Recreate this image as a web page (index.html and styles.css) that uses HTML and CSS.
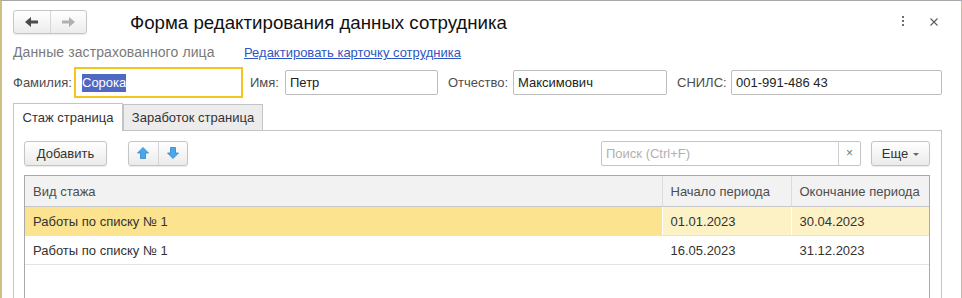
FILE: index.html
```html
<!DOCTYPE html>
<html lang="ru">
  <head>
    <meta charset="UTF-8" />
    <title>Форма редактирования данных сотрудника</title>
    <link rel="stylesheet" href="styles.css">
  </head>
  <body>
    <div class="window">
      <div class="header">
        <div class="nav">
          <span class="navBtn">
            <svg width="14" height="10" viewBox="0 0 14 10"><path d="M0 5 L6 0 V3.5 H13 V6.5 H6 V10 Z" fill="#4a4a4a"/></svg>
          </span>
          <span class="navBtn">
            <svg width="14" height="10" viewBox="0 0 14 10"><path d="M14 5 L8 0 V3.5 H1 V6.5 H8 V10 Z" fill="#b0b0b0"/></svg>
          </span>
        </div>
        <h1 class="title">Форма редактирования данных сотрудника</h1>
        <div class="tools">
          <svg class="kebab" width="4" height="12" viewBox="0 0 4 12">
            <rect x="1" y="0" width="2" height="2" fill="#6e6e6e"/>
            <rect x="1" y="4" width="2" height="2" fill="#6e6e6e"/>
            <rect x="1" y="8" width="2" height="2" fill="#6e6e6e"/>
          </svg>
          <svg class="close" width="10" height="10" viewBox="0 0 10 10"><path d="M1.5 1.5 L8.5 8.5 M8.5 1.5 L1.5 8.5" stroke="#5a5a5a" stroke-width="1.1"/></svg>
        </div>
      </div>

      <div class="subhead">
        <span class="groupName">Данные застрахованного лица</span>
        <a href="#" class="link">Редактировать карточку сотрудника</a>
      </div>

      <div class="fields">
        <label class="lbl lblSurname">Фамилия:</label>
        <div class="inp inpSurname focus"><span class="sel">Сорока</span></div>
        <label class="lbl lblName">Имя:</label>
        <div class="inp inpName">Петр</div>
        <label class="lbl lblPatr">Отчество:</label>
        <div class="inp inpPatr">Максимович</div>
        <label class="lbl lblSnils">СНИЛС:</label>
        <div class="inp inpSnils">001-991-486 43</div>
      </div>

      <div class="tabs">
        <div class="tab active">Стаж страница</div>
        <div class="tab">Заработок страница</div>
      </div>

      <div class="panel">
        <div class="toolbar">
          <button class="btn addBtn">Добавить</button>
          <div class="btnGroup">
            <span class="seg">
              <svg width="12" height="12" viewBox="0 0 12 12"><path d="M6 0.5 L11.5 6 H8.5 V11.5 H3.5 V6 H0.5 Z" fill="#4ba6ea" stroke="#2d86cc" stroke-width="0.8"/></svg>
            </span>
            <span class="seg">
              <svg width="12" height="12" viewBox="0 0 12 12"><path d="M6 11.5 L11.5 6 H8.5 V0.5 H3.5 V6 H0.5 Z" fill="#4ba6ea" stroke="#2d86cc" stroke-width="0.8"/></svg>
            </span>
          </div>
          <div class="search">
            <div class="searchInput">Поиск (Ctrl+F)</div>
            <div class="searchClear">×</div>
          </div>
          <button class="btn moreBtn">Еще <span class="caret"></span></button>
        </div>

        <div class="grid">
          <table>
            <colgroup>
              <col />
              <col class="colStart" />
              <col class="colEnd" />
            </colgroup>
            <thead>
              <tr>
                <th>Вид стажа</th>
                <th>Начало периода</th>
                <th>Окончание периода</th>
              </tr>
            </thead>
            <tbody>
              <tr class="current">
                <td class="cellActive">Работы по списку № 1</td>
                <td>01.01.2023</td>
                <td>30.04.2023</td>
              </tr>
              <tr>
                <td>Работы по списку № 1</td>
                <td>16.05.2023</td>
                <td>31.12.2023</td>
              </tr>
            </tbody>
          </table>
        </div>
      </div>
    </div>
  </body>
</html>
```

FILE: styles.css
```css
body {
  margin: 0;
  font-family: "Liberation Sans", Arial, sans-serif;
  font-size: 13px;
  color: #333;
  background: #fff;
  overflow: hidden;
}

.window {
  height: 298px;
  box-sizing: border-box;
  border-top: 1px solid #a7a7a7;
  border-left: 2px solid #cdbf86;
  border-right: 1px solid #cdbf86;
  padding: 0 19px 0 11px;
  overflow: hidden;
}

.header {
  height: 41px;
  display: flex;
  align-items: center;
}

.nav {
  display: flex;
  width: 74px;
  height: 24px;
  box-sizing: border-box;
  border: 1px solid #c6c6c6;
  border-radius: 3px;
  background: linear-gradient(#ffffff, #ececec);
  box-shadow: 0 1px 1px rgba(0, 0, 0, 0.08);
}

.navBtn {
  flex: 1;
  display: flex;
  align-items: center;
  justify-content: center;
}

.navBtn + .navBtn {
  border-left: 1px solid #d6d6d6;
}

.title {
  margin: 2px 0 0 43px;
  font-size: 18.7px;
  font-weight: normal;
  color: #111;
}

.tools {
  margin-left: auto;
  margin-right: 3px;
  display: flex;
  align-items: center;
  gap: 24px;
}

.kebab {
  margin-top: 1px;
}

.subhead {
  display: flex;
  align-items: baseline;
  padding-top: 2px;
  height: 16px;
  line-height: 16px;
}

.groupName {
  width: 231px;
  font-size: 14px;
  letter-spacing: 0.1px;
  color: #7a7a7a;
}

.link {
  color: #2f55c5;
  text-decoration: underline;
}

.fields {
  display: flex;
  align-items: center;
  margin-top: 10px;
  height: 25px;
}

.lbl {
  color: #4d4d4d;
}

.lblSurname { width: 64px; }
.lblName { width: 35px; margin-left: 10px; }
.lblPatr { width: 65px; margin-left: 10px; }
.lblSnils { width: 54px; margin-left: 10px; }

.inp {
  height: 25px;
  box-sizing: border-box;
  border: 1px solid #bdbdbd;
  border-radius: 2px;
  padding: 0 4px;
  line-height: 23px;
  color: #222;
}

.inp.focus {
  border-color: #fff;
  outline: 2px solid #f4c41f;
  outline-offset: 1px;
  border-radius: 0;
}

.sel {
  background: #5067c3;
  color: #fff;
  padding: 1px 0 2px;
}

.inpSurname { width: 163px; }
.inpName { width: 153px; }
.inpPatr { width: 154px; }
.inpSnils { width: 211px; }

.tabs {
  display: flex;
  align-items: flex-end;
  margin-top: 8px;
  margin-bottom: -1px;
  position: relative;
}

.tab {
  box-sizing: border-box;
  width: 140px;
  height: 27px;
  border: 1px solid #c4c4c4;
  background: #ececec;
  color: #333;
  text-align: center;
  line-height: 25px;
}

.tab.active {
  width: 110px;
  height: 28px;
  border-bottom: none;
  background: #fff;
  line-height: 27px;
}

.panel {
  border: 1px solid #c4c4c4;
  padding: 9px 11px 0 10px;
  height: 200px;
}

.toolbar {
  display: flex;
  align-items: center;
  height: 26px;
}

.btn {
  height: 25px;
  box-sizing: border-box;
  border: 1px solid #c4c4c4;
  border-radius: 3px;
  background: linear-gradient(#ffffff, #ebebeb);
  box-shadow: 0 1px 1px rgba(0, 0, 0, 0.08);
  font-family: inherit;
  font-size: 13px;
  color: #333;
  padding: 0;
}

.addBtn {
  width: 83px;
}

.btnGroup {
  display: flex;
  margin-left: 21px;
  width: 60px;
  height: 25px;
  box-sizing: border-box;
  border: 1px solid #c4c4c4;
  border-radius: 3px;
  background: linear-gradient(#ffffff, #ebebeb);
  box-shadow: 0 1px 1px rgba(0, 0, 0, 0.08);
}

.seg {
  flex: 1;
  display: flex;
  align-items: center;
  justify-content: center;
}

.seg + .seg {
  border-left: 1px solid #d4d4d4;
}

.search {
  display: flex;
  margin-left: auto;
  height: 25px;
  width: 260px;
  box-sizing: border-box;
  border: 1px solid #c4c4c4;
  border-radius: 2px;
}

.searchInput {
  flex: 1;
  padding-left: 4px;
  line-height: 23px;
  color: #b0b0b0;
}

.searchClear {
  width: 21px;
  border-left: 1px solid #d0d0d0;
  text-align: center;
  line-height: 22px;
  color: #777;
  font-size: 12px;
}

.moreBtn {
  margin-left: 10px;
  width: 59px;
  display: flex;
  align-items: center;
  justify-content: center;
  gap: 5px;
}

.caret {
  width: 0;
  height: 0;
  border-left: 3px solid transparent;
  border-right: 3px solid transparent;
  border-top: 3px solid #666;
  margin-top: 2px;
}

.grid {
  margin-top: 9px;
  border: 1px solid #a9a9a9;
  height: 200px;
}

table {
  width: 100%;
  border-collapse: collapse;
  table-layout: fixed;
}

.colStart { width: 129px; }
.colEnd { width: 138px; }

th {
  height: 30px;
  padding: 0 0 0 8px;
  background: #f2f2f2;
  border-bottom: 1px solid #c8c8c8;
  font-weight: normal;
  text-align: left;
  color: #4d4d4d;
}

th + th {
  border-left: 1px solid #dcdcdc;
}

td {
  height: 28px;
  padding: 0 0 0 8px;
  border-bottom: 1px solid #e3e3e3;
  color: #333;
}

td + td {
  border-left: 1px solid #fff;
}

tr.current td {
  background: #fdf1c6;
}

tr.current td.cellActive {
  background: #fbe38f;
}
```
